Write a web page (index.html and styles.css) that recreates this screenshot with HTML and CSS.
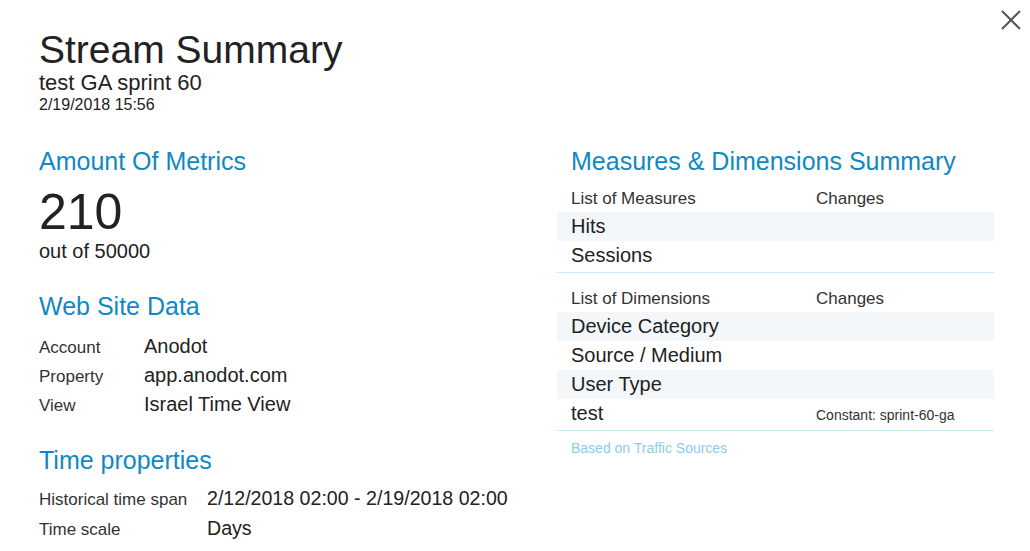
FILE: index.html
```html
<!DOCTYPE html>
<html>
<head>
<meta charset="utf-8">
<title>Stream Summary</title>
<link rel="stylesheet" href="styles.css">
</head>
<body>
<button class="close" aria-label="Close">
  <svg width="20" height="20" viewBox="0 0 20 20"><path d="M1 1 L19 19 M19 1 L1 19" stroke="#555" stroke-width="2" fill="none"/></svg>
</button>
<div class="page">
  <header class="header">
    <h1 class="title">Stream Summary</h1>
    <div class="subtitle">test GA sprint 60</div>
    <div class="date">2/19/2018 15:56</div>
  </header>
  <div class="columns">
    <section class="col-left">
      <h2 class="section-title">Amount Of Metrics</h2>
      <div class="big">210</div>
      <div class="out-of">out of 50000</div>

      <h2 class="section-title gap-web">Web Site Data</h2>
      <div class="kv kv-web">
        <div class="kv-row"><span class="kv-label">Account</span><span class="kv-value">Anodot</span></div>
        <div class="kv-row"><span class="kv-label">Property</span><span class="kv-value">app.anodot.com</span></div>
        <div class="kv-row"><span class="kv-label">View</span><span class="kv-value">Israel Time View</span></div>
      </div>

      <h2 class="section-title gap-time">Time properties</h2>
      <div class="kv kv-time">
        <div class="kv-row"><span class="kv-label">Historical time span</span><span class="kv-value">2/12/2018 02:00 - 2/19/2018 02:00</span></div>
        <div class="kv-row"><span class="kv-label">Time scale</span><span class="kv-value">Days</span></div>
      </div>
    </section>
    <section class="col-right">
      <h2 class="section-title right-title">Measures &amp; Dimensions Summary</h2>
      <div class="list list-measures">
        <div class="list-head"><span class="c1">List of Measures</span><span class="c2">Changes</span></div>
        <div class="list-row alt"><span class="c1">Hits</span><span class="c2"></span></div>
        <div class="list-row"><span class="c1">Sessions</span><span class="c2"></span></div>
      </div>
      <div class="list list-dims">
        <div class="list-head"><span class="c1">List of Dimensions</span><span class="c2">Changes</span></div>
        <div class="list-row alt"><span class="c1">Device Category</span><span class="c2"></span></div>
        <div class="list-row"><span class="c1">Source / Medium</span><span class="c2"></span></div>
        <div class="list-row alt"><span class="c1">User Type</span><span class="c2"></span></div>
        <div class="list-row"><span class="c1">test</span><span class="c2 small">Constant: sprint-60-ga</span></div>
      </div>
      <div class="note">Based on Traffic Sources</div>
    </section>
  </div>
</div>
</body>
</html>
```

FILE: styles.css
```css
html, body {
  margin: 0;
  padding: 0;
  background: #ffffff;
}
body {
  font-family: "Liberation Sans", Arial, sans-serif;
  color: #222222;
  position: relative;
  width: 1030px;
  height: 551px;
  overflow: hidden;
}
.close {
  position: absolute;
  top: 10px;
  left: 1001px;
  width: 20px;
  height: 20px;
  padding: 0;
  border: 0;
  background: none;
  display: block;
}
.close svg { display: block; }

.page {
  padding: 29px 0 0 39px;
}
.title {
  margin: 0;
  font-size: 39px;
  font-weight: normal;
  line-height: 42px;
  color: #222;
}
.subtitle {
  font-size: 22px;
  line-height: 24px;
  color: #222;
}
.date {
  margin-top: 1px;
  font-size: 16px;
  line-height: 18px;
  color: #222;
}
.columns {
  display: flex;
  margin-top: 32px;
}
.col-left {
  width: 518px;
  flex: none;
}
.col-right {
  width: 437px;
  flex: none;
}
.section-title {
  margin: 0;
  font-size: 25px;
  line-height: 30px;
  font-weight: normal;
  color: #1188c3;
}
.right-title { padding-left: 14px; }
.big {
  margin-top: 9px;
  font-size: 50px;
  line-height: 54px;
  color: #222;
}
.out-of {
  font-size: 20px;
  line-height: 24px;
  color: #222;
}
.gap-web { margin-top: 28px; }
.gap-time { margin-top: 26px; }
.kv-web { margin-top: 11px; }
.kv-time { margin-top: 8px; }
.kv-row {
  display: flex;
  align-items: baseline;
  line-height: 29px;
  height: 29px;
}
.kv-time .kv-row { line-height: 30px; height: 30px; }
.kv-label {
  font-size: 17px;
  color: #333;
  flex: none;
}
.kv-web .kv-label { width: 105px; }
.kv-time .kv-label { width: 168px; }
.kv-value {
  font-size: 20px;
  color: #222;
}
.kv-time .kv-value { font-size: 19.6px; }

.list {
  padding-bottom: 2px;
  border-bottom: 1px solid #cdeaf9;
}
.list-measures { margin-top: 9px; }
.list-dims { margin-top: 12px; }
.list-head, .list-row {
  display: flex;
  align-items: baseline;
  padding-left: 14px;
}
.list-head {
  font-size: 17px;
  line-height: 27px;
  height: 27px;
  color: #333;
}
.list-row {
  font-size: 20px;
  line-height: 29px;
  height: 29px;
  color: #222;
}
.list-row.alt { background: #f3f7fa; }
.c1 { width: 245px; flex: none; }
.c2 { flex: 1; }
.c2.small { font-size: 14px; color: #333; }
.note {
  margin-top: 9px;
  padding-left: 14px;
  font-size: 14px;
  line-height: 17px;
  color: #8ccbef;
}
```
